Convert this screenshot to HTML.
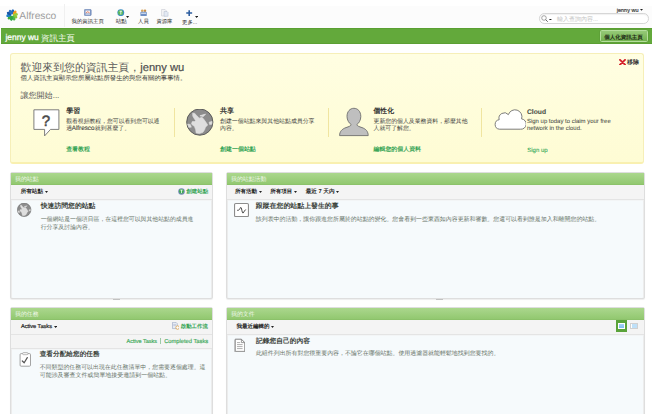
<!DOCTYPE html><html><head><meta charset="utf-8"><style>
*{margin:0;padding:0;box-sizing:border-box}
html,body{width:652px;height:416px;overflow:hidden;background:#fff;font-family:"Liberation Sans",sans-serif;color:#333;text-rendering:geometricPrecision}
.a{position:absolute;white-space:nowrap;line-height:10px}
.c{font-size:133.3%;-webkit-text-stroke:var(--sk,0.35px) currentColor}
.m{display:inline-block;width:0;height:0;vertical-align:baseline}
.rf .c{font-size:100%;-webkit-text-stroke:0}
</style></head><body>
<div class="a" style="left:0px;top:0px;width:652px;height:28px;background:#fcfcfc"></div>
<div class="a" style="left:0px;top:0px;width:652px;height:6px;background:#fff"></div>
<svg class="a" style="left:6.2px;top:9px" width="12.2" height="12.2" viewBox="0 0 26 26"><g transform="translate(13,13)"><ellipse cx="1.6" cy="-6.6" rx="3.3" ry="5.8" fill="#1f63b8" transform="rotate(0)"/><ellipse cx="1.6" cy="-6.6" rx="3.3" ry="5.8" fill="#f39a1e" transform="rotate(36)"/><ellipse cx="1.6" cy="-6.6" rx="3.3" ry="5.8" fill="#9ccb3b" transform="rotate(72)"/><ellipse cx="1.6" cy="-6.6" rx="3.3" ry="5.8" fill="#8cc63f" transform="rotate(108)"/><ellipse cx="1.6" cy="-6.6" rx="3.3" ry="5.8" fill="#4db848" transform="rotate(144)"/><ellipse cx="1.6" cy="-6.6" rx="3.3" ry="5.8" fill="#2ea44a" transform="rotate(180)"/><ellipse cx="1.6" cy="-6.6" rx="3.3" ry="5.8" fill="#3aaa3c" transform="rotate(216)"/><ellipse cx="1.6" cy="-6.6" rx="3.3" ry="5.8" fill="#1d7fc6" transform="rotate(252)"/><ellipse cx="1.6" cy="-6.6" rx="3.3" ry="5.8" fill="#1a55a5" transform="rotate(288)"/><ellipse cx="1.6" cy="-6.6" rx="3.3" ry="5.8" fill="#2a70c2" transform="rotate(324)"/><circle r="1.8" fill="#fff"/></g></svg>
<div class="a" style="left:19.3px;top:11.5px;font-size:10.254px;font-weight:normal;color:#9d9d9d;">Alfresco</div>
<div class="a" style="left:64px;top:4px;width:1px;height:23px;background:#f0f0f0"></div>
<svg class="a" style="left:84.2px;top:9px" width="7.5" height="7" viewBox="0 0 15 14"><rect x="0.5" y="0.5" width="14" height="13" rx="2.5" fill="#7f97c4" stroke="#6a83b3"/><rect x="3" y="3" width="9" height="6" fill="#f4f0ee"/><path d="M4 8 L7 5.5 L11 7.5" stroke="#e05a3a" stroke-width="1.4" fill="none"/><rect x="3" y="10" width="9" height="1.5" fill="#cfd8ea"/></svg>
<svg class="a" style="left:117.2px;top:9px" width="7.6" height="7.4" viewBox="0 0 15 15"><circle cx="7.5" cy="7.5" r="7" fill="#3d8fc4"/><circle cx="7" cy="7" r="5.2" fill="#5cb85c"/><path d="M5 4.5 H10 M7.5 4.5 V11" stroke="#fff" stroke-width="1.6"/></svg>
<svg class="a" style="left:126.4px;top:16.3px" width="3.2" height="1.98" viewBox="0 0 3.2 1.98"><path d="M0 0 H3.2 L1.6 1.98 Z" fill="#222"/></svg>
<svg class="a" style="left:140.2px;top:8.8px" width="7.2" height="7.4" viewBox="0 0 14 15"><circle cx="4.2" cy="3.6" r="2.6" fill="#d9a55a"/><circle cx="9.8" cy="3.6" r="2.6" fill="#c98f42"/><rect x="0.5" y="5.5" width="13" height="9" rx="2" fill="#6f8fc4"/><rect x="2" y="7.5" width="10" height="2.2" fill="#dfe7f3"/></svg>
<svg class="a" style="left:161.2px;top:9px" width="7.6" height="7.5" viewBox="0 0 15 15"><path d="M1 1 H8 L11 4 V14 H1 Z" fill="#f3f3f5" stroke="#b9bcc6" stroke-width="0.9"/><path d="M6 5 H12 L14 7 V14.5 H6 Z" fill="#e3e9f3" stroke="#a9b3c8" stroke-width="0.9"/></svg>
<svg class="a" style="left:186.4px;top:10px" width="6.4" height="6.2" viewBox="0 0 13 12.5"><path d="M6.5 0.5 V12 M0.5 6.2 H12.5" stroke="#2d5d9f" stroke-width="3.2"/></svg>
<svg class="a" style="left:195px;top:16.3px" width="3.2" height="1.98" viewBox="0 0 3.2 1.98"><path d="M0 0 H3.2 L1.6 1.98 Z" fill="#222"/></svg>
<div class="a" style="left:71.6px;top:16.8px;font-size:5.393px;font-weight:normal;color:#222;--sk:0.22px;"><span class="c">我的資訊主頁</span></div>
<div class="a" style="left:115.8px;top:16.8px;font-size:5.51px;font-weight:normal;color:#222;--sk:0.22px;"><span class="c">站點</span></div>
<div class="a" style="left:138.1px;top:16.8px;font-size:5.359px;font-weight:normal;color:#222;--sk:0.22px;"><span class="c">人員</span></div>
<div class="a" style="left:156.4px;top:16.8px;font-size:5.343px;font-weight:normal;color:#222;--sk:0.22px;"><span class="c">資源庫</span></div>
<div class="a" style="left:182.1px;top:17.8px;font-size:5.301px;font-weight:normal;color:#222;--sk:0.22px;"><span class="c">更多</span>...</div>
<div class="a" style="left:616.7px;top:5.9px;font-size:5.549px;font-weight:normal;color:#333;-webkit-text-stroke:0.15px currentColor;">jenny wu</div>
<svg class="a" style="left:640.3px;top:9.3px" width="3" height="1.86" viewBox="0 0 3 1.86"><path d="M0 0 H3 L1.5 1.86 Z" fill="#222"/></svg>
<div class="a" style="left:538.6px;top:13.4px;width:110px;height:10.3px;border:1px solid #d6d6d6;border-radius:5.2px;background:#fff;box-shadow:inset 0 1px 1px rgba(0,0,0,.06)"></div>
<svg class="a" style="left:540.5px;top:15px" width="8.5" height="7.5" viewBox="0 0 17 15"><circle cx="6" cy="6" r="4.6" fill="#fff" stroke="#777" stroke-width="1.3"/><path d="M9.3 9.3 L13.5 13.5" stroke="#666" stroke-width="2"/></svg>
<svg class="a" style="left:549.4px;top:18.6px" width="2.8" height="1.74" viewBox="0 0 2.8 1.74"><path d="M0 0 H2.8 L1.4 1.74 Z" fill="#222"/></svg>
<div class="a" style="left:557px;top:14.9px;font-size:6.008px;font-weight:normal;color:#c4c4c4;--sk:0.25px;"><span class="c">輸入查詢內容</span>...</div>
<div class="a" style="left:1px;top:28px;width:651px;height:16px;background:#63a93b;border-top:1px solid #5aa032;border-bottom:1px solid #5b9f33"></div>
<div class="a" style="left:5.5px;top:31.7px;font-size:8.431px;font-weight:normal;color:#fff;-webkit-text-stroke:0.25px currentColor;">jenny wu</div>
<div class="a" style="left:41.1px;top:32.5px;font-size:8.435px;font-weight:normal;color:#f4fbef;--sk:0.1px;"><span class="c">資訊主頁</span></div>
<div class="a" style="left:600px;top:30.2px;width:47.6px;height:11.6px;background:linear-gradient(#95c977,#73b24f);border:1px solid #b5de9c;border-radius:1.5px;box-shadow:0 0 0 .5px #5a9a36"></div>
<div class="a" style="left:604.3px;top:33px;font-size:5.497px;font-weight:bold;color:#1e2a16;--sk:0.3px;"><span class="c">個人化資訊主頁</span></div>
<div class="a" style="left:10px;top:53px;width:634.3px;height:110.7px;background:linear-gradient(#fffee2,#fefcd4);border:1px solid #f6efb8;border-bottom:2px solid #f9f0b0;border-radius:3px"></div>
<svg class="a" style="left:618.5px;top:58.8px" width="7" height="6.5" viewBox="0 0 7 6.5"><path d="M1 .9 L6 5.6 M6 .9 L1 5.6" stroke="#d5212b" stroke-width="1.9" stroke-linecap="round"/></svg>
<div class="a" style="left:627.1px;top:58.2px;font-size:6.008px;font-weight:bold;color:#333;--sk:0.3px;"><span class="c">移除</span></div>
<div class="a" style="left:20.6px;top:63px;font-size:10.862px;font-weight:normal;color:#5a5a5a;--sk:0.1px;"><span class="c">歡迎來到您的資訊主頁，</span></div>
<div class="a" style="left:140.2px;top:62.8px;font-size:11.203px;font-weight:normal;color:#505050;-webkit-text-stroke:0.2px currentColor;">jenny wu</div>
<div class="a" style="left:20.6px;top:74px;font-size:6.396px;font-weight:normal;color:#3a3a3a;--sk:0.15px;"><span class="c">個人資訊主頁顯示您所屬站點所發生的與您有關的事事情。</span></div>
<div class="a" style="left:20.4px;top:91px;font-size:8.072px;font-weight:normal;color:#555;--sk:0.25px;"><span class="c">讓您開始</span>...</div>
<div class="a" style="left:173.9px;top:108px;width:1px;height:28.5px;background:#f0e5a0"></div>
<div class="a" style="left:327.8px;top:108px;width:1px;height:28.5px;background:#f0e5a0"></div>
<div class="a" style="left:481.2px;top:108px;width:1px;height:28.5px;background:#f0e5a0"></div>
<svg class="a" style="left:33.3px;top:109.3px" width="27" height="28" viewBox="0 0 27 28">
<path d="M0.9 0.8 H25.9 V20.4 H17.5 L11.6 26.9 V20.4 H0.9 Z" fill="#fff" stroke="#707070" stroke-width="0.9" stroke-linejoin="round"/>
<text x="13" y="17.1" font-family="Liberation Sans" font-size="15" font-weight="normal" fill="#4a4a4a" stroke="#4a4a4a" stroke-width="0.5" text-anchor="middle">?</text>
</svg>
<div class="a" style="left:66.2px;top:107.2px;font-size:6.961px;font-weight:bold;color:#333;--sk:0.3px;"><span class="c">學習</span></div>
<div class="a" style="left:66.2px;top:117px;font-size:5.843px;font-weight:normal;color:#3c3c3c;--sk:0.18px;"><span class="c">觀看視頻教程，您可以看到您可以通</span></div>
<div class="a" style="left:66.2px;top:124.1px;font-size:5.9px;font-weight:normal;color:#3c3c3c;--sk:0.3px;"><span class="c">過</span></div>
<div class="a" style="left:71.7px;top:124.4px;font-size:6.342px;font-weight:normal;color:#3c3c3c;-webkit-text-stroke:0.1px currentColor;">Alfresco</div>
<div class="a" style="left:94.8px;top:124.1px;font-size:5.904px;font-weight:normal;color:#3c3c3c;--sk:0.3px;"><span class="c">就到甚麼了。</span></div>
<div class="a" style="left:66.2px;top:145.4px;font-size:5.93px;font-weight:bold;color:#37a557;--sk:0.3px;"><span class="c">查看教程</span></div>
<svg class="a" style="left:186.3px;top:109px" width="27.6" height="27" viewBox="0 0 28 27.4"><circle cx="14" cy="13.3" r="13.3" fill="#8c8c8c" stroke="#5a5a5a" stroke-width="1"/>
<path d="M6.8 4.1 L9 4.5 L10.7 6.7 L12.4 8 L13.3 9.3 L16.3 8.4 L18.5 11 L20.6 14 L22 16.2 L19.8 18.4 L18.9 21 L17.2 23.6 L13.7 24.9 L10.3 24.4 L9.8 21 L8.5 17.5 L6.8 16.6 L5.5 14.9 L6.4 12.7 L8.5 12.7 L9.8 11.9 L8.1 9.3 L6.8 7.1 Z" fill="#dedede" stroke="#dedede" stroke-width="0.6" stroke-linejoin="round"/>
<path d="M14.1 6.9 L19.8 5.2 L17.6 7.6 Z" fill="#dedede" stroke="#dedede" stroke-width="0.8" stroke-linejoin="round"/>
<path d="M23.4 13.4 L26.4 12.6 L26.2 15.4 L24 15.8 Z" fill="#dedede" stroke="#dedede" stroke-width="0.6" stroke-linejoin="round"/>
<path d="M1.6 15.2 L4.4 15.8 L5.4 18.4 L2.8 18.6 Z" fill="#dedede" stroke="#dedede" stroke-width="0.6" stroke-linejoin="round"/></svg>
<div class="a" style="left:220px;top:107.2px;font-size:7.011px;font-weight:bold;color:#333;--sk:0.3px;"><span class="c">共享</span></div>
<div class="a" style="left:220px;top:117px;font-size:5.924px;font-weight:normal;color:#3c3c3c;--sk:0.18px;"><span class="c">創建一個站點來與其他站點成員分享</span></div>
<div class="a" style="left:220px;top:124.1px;font-size:5.904px;font-weight:normal;color:#3c3c3c;--sk:0.18px;"><span class="c">內容。</span></div>
<div class="a" style="left:220px;top:145.4px;font-size:5.988px;font-weight:bold;color:#37a557;--sk:0.3px;"><span class="c">創建一個站點</span></div>
<svg class="a" style="left:338px;top:107px" width="32" height="30" viewBox="0 0 32 30">
<path d="M13.2 17.6 C11 16.2 9 13 9 9.5 C9 4.5 12 1.3 15.9 1.3 C19.8 1.3 22.8 4.5 22.8 9.5 C22.8 13 21 16.2 18.8 17.6 C19.5 19.2 21 19.6 24 20.6 C28 22 30.2 24.5 30.2 28.6 L1.6 28.6 C1.6 24.5 4 22 8 20.6 C11 19.6 12.5 19.2 13.2 17.6 Z" fill="#bfbfbf" stroke="#6e6e6e" stroke-width="0.9" stroke-linejoin="round"/>
</svg>
<div class="a" style="left:373.5px;top:107.2px;font-size:6.847px;font-weight:bold;color:#333;--sk:0.3px;"><span class="c">個性化</span></div>
<div class="a" style="left:373.5px;top:117px;font-size:5.88px;font-weight:normal;color:#3c3c3c;--sk:0.18px;"><span class="c">更新您的個人及業務資料，那麼其他</span></div>
<div class="a" style="left:373.5px;top:124.1px;font-size:5.905px;font-weight:normal;color:#3c3c3c;--sk:0.18px;"><span class="c">人就可了解您。</span></div>
<div class="a" style="left:373.5px;top:145.4px;font-size:5.943px;font-weight:bold;color:#37a557;--sk:0.3px;"><span class="c">編輯您的個人資料</span></div>
<svg class="a" style="left:494px;top:108.6px" width="32" height="21" viewBox="0 0 32 21">
<path d="M5.3 20.2 A4.8 4.8 0 0 1 5.2 10.7 A5.4 5.4 0 0 1 14.4 5.6 A6.9 6.9 0 0 1 27.6 9.9 A4.9 4.9 0 0 1 26.4 20.2 Z" fill="#fff" stroke="#6e6e6e" stroke-width="0.9" stroke-linejoin="round"/>
</svg>
<div class="a" style="left:527px;top:108.4px;font-size:6.71px;font-weight:bold;color:#4a4f46;-webkit-text-stroke:0.1px currentColor;">Cloud</div>
<div class="a" style="left:527px;top:117.1px;font-size:5.965px;font-weight:normal;color:#4a4e46;-webkit-text-stroke:0.05px currentColor;">Sign up today to claim your free</div>
<div class="a" style="left:527px;top:124.3px;font-size:5.964px;font-weight:normal;color:#4a4e46;-webkit-text-stroke:0.05px currentColor;">network in the cloud.</div>
<div class="a" style="left:527.2px;top:146px;font-size:6.049px;font-weight:normal;color:#40ad5e;-webkit-text-stroke:0.12px currentColor;">Sign up</div>
<div class="a" style="left:10px;top:171.8px;width:203.4px;height:127px;background:#f6fafc;border:1px solid #dedede;border-radius:2px;box-shadow:inset 1px 0 0 #ececec,inset -1px 0 0 #ececec,0 1px 1px rgba(0,0,0,.07)"></div>
<div class="a" style="left:11px;top:172.8px;width:201.4px;height:12px;background:linear-gradient(#abd78d,#92c870);border-bottom:1px solid #8cc26a"></div>
<div class="a" style="left:15px;top:175.3px;font-size:5.9px;font-weight:normal;color:#f1f8ec;--sk:0.12px;"><span class="c">我的站點</span></div>
<div class="a" style="left:11px;top:184.8px;width:201.4px;height:15.2px;background:#f4f4f4;border-bottom:1px solid #e4e4e4;box-shadow:0 .5px 0 #efefef"></div>
<div class="a" style="left:226px;top:171.8px;width:418.6px;height:127px;background:#f6fafc;border:1px solid #dedede;border-radius:2px;box-shadow:inset 1px 0 0 #ececec,inset -1px 0 0 #ececec,0 1px 1px rgba(0,0,0,.07)"></div>
<div class="a" style="left:227px;top:172.8px;width:416.6px;height:12px;background:linear-gradient(#abd78d,#92c870);border-bottom:1px solid #8cc26a"></div>
<div class="a" style="left:231px;top:175.3px;font-size:5.9px;font-weight:normal;color:#f1f8ec;--sk:0.12px;"><span class="c">我的站點活動</span></div>
<div class="a" style="left:227px;top:184.8px;width:416.6px;height:15.2px;background:#f4f4f4;border-bottom:1px solid #e4e4e4;box-shadow:0 .5px 0 #efefef"></div>
<div class="a" style="left:10px;top:306.7px;width:203.4px;height:113px;background:#f6fafc;border:1px solid #dedede;border-radius:2px;box-shadow:inset 1px 0 0 #ececec,inset -1px 0 0 #ececec,0 1px 1px rgba(0,0,0,.07)"></div>
<div class="a" style="left:11px;top:307.7px;width:201.4px;height:12px;background:linear-gradient(#abd78d,#92c870);border-bottom:1px solid #8cc26a"></div>
<div class="a" style="left:15px;top:310.2px;font-size:5.9px;font-weight:normal;color:#f1f8ec;--sk:0.12px;"><span class="c">我的任務</span></div>
<div class="a" style="left:11px;top:319.6px;width:201.4px;height:15px;background:#f4f4f4;border-bottom:1px solid #e4e4e4;box-shadow:0 .5px 0 #efefef"></div>
<div class="a" style="left:11px;top:334.6px;width:201.4px;height:14.2px;background:#f4f4f4;border-bottom:1px solid #e4e4e4;box-shadow:0 .5px 0 #efefef"></div>
<div class="a" style="left:226px;top:306.7px;width:418.6px;height:113px;background:#f6fafc;border:1px solid #dedede;border-radius:2px;box-shadow:inset 1px 0 0 #ececec,inset -1px 0 0 #ececec,0 1px 1px rgba(0,0,0,.07)"></div>
<div class="a" style="left:227px;top:307.7px;width:416.6px;height:12px;background:linear-gradient(#abd78d,#92c870);border-bottom:1px solid #8cc26a"></div>
<div class="a" style="left:231px;top:310.2px;font-size:5.9px;font-weight:normal;color:#f1f8ec;--sk:0.12px;"><span class="c">我的文件</span></div>
<div class="a" style="left:227px;top:319.5px;width:416.6px;height:15.2px;background:#f4f4f4;border-bottom:1px solid #e4e4e4;box-shadow:0 .5px 0 #efefef"></div>
<div class="a" style="left:113.1px;top:298.6px;width:6.8px;height:1.6px;background:#c2c2c2"></div>
<div class="a" style="left:436.2px;top:298.6px;width:6.8px;height:1.6px;background:#c2c2c2"></div>
<div class="a" style="left:20.7px;top:187px;font-size:5.586px;font-weight:bold;color:#222;--sk:0.3px;"><span class="c">所有站點</span></div>
<svg class="a" style="left:44.9px;top:190.8px" width="3.1" height="1.92" viewBox="0 0 3.1 1.92"><path d="M0 0 H3.1 L1.55 1.92 Z" fill="#222"/></svg>
<svg class="a" style="left:177.6px;top:187.6px" width="7" height="7" viewBox="0 0 15 15"><circle cx="7.5" cy="7.5" r="7" fill="#7389b6"/><circle cx="7.3" cy="7.2" r="5" fill="#3fae4f"/><path d="M5 4.5 H10 M7.5 4.5 V11" stroke="#fff" stroke-width="1.6"/></svg>
<div class="a" style="left:186.3px;top:187px;font-size:5.479px;font-weight:bold;color:#37a557;--sk:0.25px;"><span class="c">創建站點</span></div>
<svg class="a" style="left:17.3px;top:202.8px" width="14.3" height="14" viewBox="0 0 28 27.4"><circle cx="14" cy="13.3" r="13.3" fill="#8c8c8c" stroke="#5a5a5a" stroke-width="1"/>
<path d="M6.8 4.1 L9 4.5 L10.7 6.7 L12.4 8 L13.3 9.3 L16.3 8.4 L18.5 11 L20.6 14 L22 16.2 L19.8 18.4 L18.9 21 L17.2 23.6 L13.7 24.9 L10.3 24.4 L9.8 21 L8.5 17.5 L6.8 16.6 L5.5 14.9 L6.4 12.7 L8.5 12.7 L9.8 11.9 L8.1 9.3 L6.8 7.1 Z" fill="#dedede" stroke="#dedede" stroke-width="0.6" stroke-linejoin="round"/>
<path d="M14.1 6.9 L19.8 5.2 L17.6 7.6 Z" fill="#dedede" stroke="#dedede" stroke-width="0.8" stroke-linejoin="round"/>
<path d="M23.4 13.4 L26.4 12.6 L26.2 15.4 L24 15.8 Z" fill="#dedede" stroke="#dedede" stroke-width="0.6" stroke-linejoin="round"/>
<path d="M1.6 15.2 L4.4 15.8 L5.4 18.4 L2.8 18.6 Z" fill="#dedede" stroke="#dedede" stroke-width="0.6" stroke-linejoin="round"/></svg>
<div class="a" style="left:40.7px;top:201.8px;font-size:6.859px;font-weight:bold;color:#3b433b;--sk:0.3px;"><span class="c">快速訪問您的站點</span></div>
<div class="a" style="left:40.7px;top:214.5px;font-size:5.897px;font-weight:normal;color:#647064;--sk:0.15px;"><span class="c">一個網站是一個項目區，在這裡您可以與其他站點的成員進</span></div>
<div class="a" style="left:40.7px;top:223px;font-size:5.904px;font-weight:normal;color:#647064;--sk:0.15px;"><span class="c">行分享及討論內容。</span></div>
<div class="a" style="left:234.9px;top:187px;font-size:5.51px;font-weight:bold;color:#222;--sk:0.3px;"><span class="c">所有活動</span></div>
<svg class="a" style="left:258.6px;top:190.8px" width="3.1" height="1.92" viewBox="0 0 3.1 1.92"><path d="M0 0 H3.1 L1.55 1.92 Z" fill="#222"/></svg>
<div class="a" style="left:270.3px;top:187px;font-size:5.51px;font-weight:bold;color:#222;--sk:0.3px;"><span class="c">所有項目</span></div>
<svg class="a" style="left:294.1px;top:190.8px" width="3.1" height="1.92" viewBox="0 0 3.1 1.92"><path d="M0 0 H3.1 L1.55 1.92 Z" fill="#222"/></svg>
<div class="a" style="left:305.7px;top:187px;font-size:5.681px;font-weight:bold;color:#222;--sk:0.3px;"><span class="c">最近</span> 7 <span class="c">天內</span></div>
<svg class="a" style="left:335.9px;top:190.8px" width="3.1" height="1.92" viewBox="0 0 3.1 1.92"><path d="M0 0 H3.1 L1.55 1.92 Z" fill="#222"/></svg>
<svg class="a" style="left:233.8px;top:203.3px" width="15" height="14" viewBox="0 0 15 14">
<rect x="0.55" y="0.55" width="13.9" height="13.1" rx="1.2" fill="#fff" stroke="#8c8c8c" stroke-width="1.1"/>
<path d="M3.2 7.3 C4.5 7.3 5.3 7.2 6 5.5 C6.5 3.9 7 3.9 7.6 6 C8.2 9 8.6 10.7 9.3 9.9 C10 9.1 10.6 7.2 11.7 6.5" fill="none" stroke="#444" stroke-width="1"/>
</svg>
<div class="a" style="left:255.8px;top:202px;font-size:6.918px;font-weight:bold;color:#3b433b;--sk:0.3px;"><span class="c">跟蹤在您的站點上發生的事</span></div>
<div class="a" style="left:255.8px;top:214.5px;font-size:5.954px;font-weight:normal;color:#647064;--sk:0.15px;"><span class="c">該列表中的活動，讓你跟進您所屬於的站點的變化。您會看到一些東西如內容更新和審數。您還可以看到誰是加入和離開您的站點。</span></div>
<div class="a" style="left:20.9px;top:322.4px;font-size:5.622px;font-weight:normal;color:#222;-webkit-text-stroke:0.2px currentColor;">Active Tasks</div>
<svg class="a" style="left:54.2px;top:325.5px" width="3.3" height="2.05" viewBox="0 0 3.3 2.05"><path d="M0 0 H3.3 L1.65 2.05 Z" fill="#222"/></svg>
<svg class="a" style="left:171.9px;top:322.3px" width="7.6" height="7.6" viewBox="0 0 15 15"><path d="M1 0.8 H8 L10.5 3.3 V13 H1 Z" fill="#e6ebf4" stroke="#7d8fb3" stroke-width="0.9"/><path d="M2.5 5 H8 M2.5 7 H8" stroke="#9aa8c6" stroke-width="0.8"/><circle cx="11" cy="11" r="3.4" fill="#fff" stroke="#d9a04a" stroke-width="1.6"/></svg>
<div class="a" style="left:180.8px;top:321.8px;font-size:5.423px;font-weight:bold;color:#37a557;--sk:0.25px;"><span class="c">啟動工作流</span></div>
<div class="a" style="left:126.5px;top:336.8px;font-size:5.545px;font-weight:normal;color:#3aa857;-webkit-text-stroke:0.15px currentColor;">Active Tasks</div>
<div class="a" style="left:160.2px;top:337.8px;width:0.7px;height:6px;background:#9cc9a6"></div>
<div class="a" style="left:164.2px;top:336.8px;font-size:5.753px;font-weight:normal;color:#3aa857;-webkit-text-stroke:0.15px currentColor;">Completed Tasks</div>
<svg class="a" style="left:18.6px;top:352px" width="12.2" height="14.5" viewBox="0 0 12.2 14.5">
<rect x="1.1" y="1.6" width="10.4" height="12.6" rx="1" fill="#fff" stroke="#999" stroke-width="0.9"/>
<rect x="3.6" y="0.5" width="5.4" height="2.2" rx="1" fill="#f0f0f0" stroke="#999" stroke-width="0.6"/>
<path d="M3.3 9 L5.2 10.8 L8.3 5.6" fill="none" stroke="#555" stroke-width="1.2" stroke-linecap="round" stroke-linejoin="round"/>
</svg>
<div class="a" style="left:39.7px;top:350.3px;font-size:6.676px;font-weight:bold;color:#3b433b;--sk:0.3px;"><span class="c">查看分配給您的任務</span></div>
<div class="a" style="left:39.7px;top:362.7px;font-size:5.933px;font-weight:normal;color:#647064;--sk:0.15px;"><span class="c">不同類型的任務可以出現在此任務清單中，您需要逐個處理。這</span></div>
<div class="a" style="left:39.7px;top:371.3px;font-size:5.989px;font-weight:normal;color:#647064;--sk:0.15px;"><span class="c">可能涉及審查文件或簡單地接受邀請到一個站點。</span></div>
<div class="a" style="left:236.6px;top:322px;font-size:5.51px;font-weight:bold;color:#222;--sk:0.3px;"><span class="c">我最近編輯的</span></div>
<svg class="a" style="left:271.3px;top:325.6px" width="3.1" height="1.92" viewBox="0 0 3.1 1.92"><path d="M0 0 H3.1 L1.55 1.92 Z" fill="#222"/></svg>
<div class="a" style="left:616.2px;top:320px;width:10.4px;height:12.4px;background:#5aa33a"></div>
<div class="a" style="left:617.9px;top:322.9px;width:7px;height:6.6px;background:#fff"></div>
<div class="a" style="left:618.9px;top:324px;width:5px;height:4.4px;background:linear-gradient(#a9d3f5,#7fbdf0)"></div>
<div class="a" style="left:630.4px;top:322.9px;width:7.4px;height:6.6px;background:#fff;border:.6px solid #d0d0d0"></div>
<div class="a" style="left:631.6px;top:324px;width:2.2px;height:4.4px;background:#bfe0f8"></div>
<div class="a" style="left:634.4px;top:324px;width:2.2px;height:4.4px;background:#bfe0f8"></div>
<svg class="a" style="left:233.8px;top:338.2px" width="11.5" height="14" viewBox="0 0 11.5 14">
<path d="M1.2 1.2 H7.4 L10.8 4.6 V13.4 H1.2 Z" fill="#fff" stroke="#808080" stroke-width="1"/>
<path d="M0.6 2 V13.9 H10" fill="none" stroke="#b5b5b5" stroke-width="0.7"/>
<path d="M7.4 1.2 V4.6 H10.8" fill="none" stroke="#808080" stroke-width="0.8"/>
<path d="M3 4.6 H6.2 M3 6.6 H8.6 M3 8.6 H8.6 M3 10.6 H8.6" stroke="#9a9a9a" stroke-width="0.8"/>
</svg>
<div class="a" style="left:255.9px;top:336.6px;font-size:6.772px;font-weight:bold;color:#3b433b;--sk:0.3px;"><span class="c">記錄您自己的內容</span></div>
<div class="a" style="left:255.9px;top:349px;font-size:5.956px;font-weight:normal;color:#647064;--sk:0.15px;"><span class="c">此組件列出所有對您很重要內容，不論它在哪個站點。使用過濾器就能輕鬆地找到您要找的。</span></div>
<div class="a" style="left:0px;top:413.8px;width:652px;height:2.2px;background:#fff"></div>
<script>(function(){var s=document.createElement("span");s.style.cssText="position:absolute;left:-999px;top:0;font-size:100px;white-space:nowrap;font-family:\"Liberation Sans\",sans-serif;text-rendering:geometricPrecision";s.textContent="\u4e2d\u6587\u5b57\u9ad4";document.body.appendChild(s);var w=s.getBoundingClientRect().width;document.body.removeChild(s);if(Math.abs(w-300)>8){document.documentElement.className="rf";}})();</script></body></html>
